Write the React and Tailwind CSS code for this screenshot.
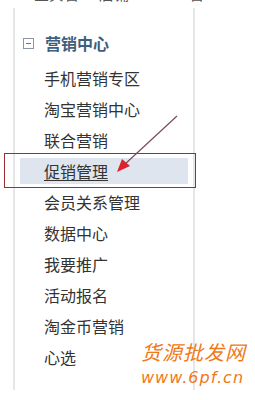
import React from 'react';

const items = [
  '手机营销专区',
  '淘宝营销中心',
  '联合营销',
  '促销管理',
  '会员关系管理',
  '数据中心',
  '我要推广',
  '活动报名',
  '淘金币营销',
  '心选',
];

const font = { fontFamily: '"Noto Sans CJK SC", "Noto Sans", sans-serif' };

const App = () => {
  return (
    <div className="relative w-[255px] h-[400px] bg-white overflow-hidden" style={font}>
      {/* cut-off row above the panel */}
      <div className="h-[8px] overflow-hidden">
        <div className="-mt-[17px] pl-[34px] flex gap-[20px] text-[15px] leading-[22px] text-[#555]">
          <span>宝贝管</span>
          <span>店铺</span>
          <span className="ml-[40px]">管</span>
        </div>
      </div>

      <div className="ml-[13px] w-[182px] h-[382px] border-l-2 border-r-2 border-[#e6e6e6] pt-[18px]">
        <div className="h-[34px] flex items-center pl-[8px]">
          <span className="w-[11px] h-[11px] border border-[#8a96a3] flex items-center justify-center">
            <span className="w-[5px] h-px bg-[#6a7785]" />
          </span>
          <span className="ml-[11px] text-[16px] font-bold text-[#3e5f7e]">营销中心</span>
        </div>

        <div className="mt-[2.5px]">
          {items.map((name) =>
            name === '促销管理' ? (
              <div key={name} className="relative h-[31px] flex items-center">
                <div className="absolute left-[-11px] right-[-3px] top-[-2.5px] bottom-[-1.5px] border-[1.5px] border-[#9b2d37]" />
                <div className="absolute left-[5px] right-[5px] top-[2px] bottom-[3px] bg-[#dfe5ee]" />
                <span className="relative pl-[29px] text-[16px] text-[#333] underline underline-offset-[2px]">
                  {name}
                </span>
              </div>
            ) : (
              <div key={name} className="h-[31px] flex items-center pl-[29px] text-[16px] text-[#333]">
                {name}
              </div>
            )
          )}
        </div>
      </div>

      {/* arrow annotation */}
      <svg className="absolute left-0 top-0" width="255" height="400">
        <line x1="177" y1="116" x2="124" y2="165" stroke="#7d4a58" strokeWidth="1.2" />
        <polygon points="117,172 122,159 130,166" fill="#e0202c" />
      </svg>

      {/* watermark */}
      <div className="absolute left-[141px] top-[342px] text-[#f07818] italic leading-none">
        <div className="text-[20px] tracking-[1px]">货源批发网</div>
        <div className="mt-[8px] text-[16px] tracking-[1px]" style={{ fontFamily: '"DejaVu Sans", sans-serif' }}>
          www.6pf.cn
        </div>
      </div>
    </div>
  );
};

export default App;
